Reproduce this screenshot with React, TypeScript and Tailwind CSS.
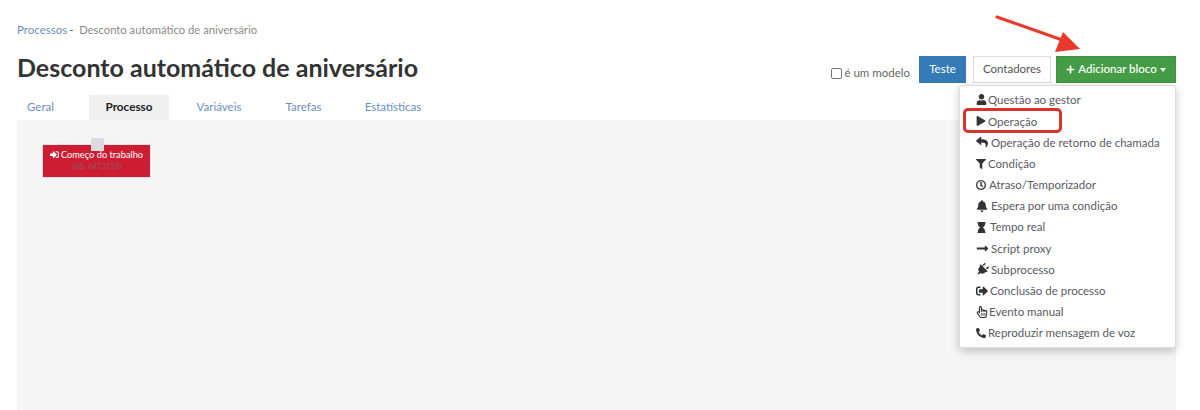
import React from "react";
import {
  FaUser,
  FaPlay,
  FaReply,
  FaFilter,
  FaRegClock,
  FaBell,
  FaHourglass,
  FaLongArrowAltRight,
  FaPlug,
  FaRegHandPointer,
  FaPhoneAlt,
  FaSignInAlt,
  FaSignOutAlt,
  FaPlus,
} from "react-icons/fa";

const blocks = [
  { label: "Questão ao gestor", icon: <FaUser size={11} />, gap: "w-[12px]" },
  { label: "Operação", icon: <FaPlay size={10} />, gap: "w-[12px]" },
  { label: "Operação de retorno de chamada", icon: <FaReply size={12} />, gap: "w-[15px]" },
  { label: "Condição", icon: <FaFilter size={10} />, gap: "w-[12px]" },
  { label: "Atraso/Temporizador", icon: <FaRegClock size={10} className="stroke-[20px]" />, gap: "w-[13px]" },
  { label: "Espera por uma condição", icon: <FaBell size={12} />, gap: "w-[15px]" },
  { label: "Tempo real", icon: <FaHourglass size={11} />, gap: "w-[14px]" },
  { label: "Script proxy", icon: <FaLongArrowAltRight size={13} />, gap: "w-[15px]" },
  { label: "Subprocesso", icon: <FaPlug size={13} className="rotate-45" />, gap: "w-[15px]" },
  { label: "Conclusão de processo", icon: <FaSignOutAlt size={12} />, gap: "w-[14px]" },
  { label: "Evento manual", icon: <FaRegHandPointer size={12} />, gap: "w-[13px]" },
  { label: "Reproduzir mensagem de voz", icon: <FaPhoneAlt size={10} />, gap: "w-[12px]" },
];

const tabs = [
  { label: "Geral", width: "w-[72px] pr-[25px]" },
  { label: "Processo", width: "w-[80px]" },
  { label: "Variáveis", width: "w-[100px]" },
  { label: "Tarefas", width: "w-[69px]" },
  { label: "Estatísticas", width: "w-[110px]" },
];

const App = () => {
  return (
    <div className="relative h-[410px] w-[1200px] overflow-hidden bg-white pl-[17px] pr-[24px] pt-[23px] font-['Lato',sans-serif] text-[#555]">
      <p className="flex h-[14px] whitespace-nowrap text-[11.5px] leading-[14px] text-[#8a8a8a]">
        <span className="text-[#6b8fbd]">Processos</span>
        <span className="w-[12px] pl-[2px] text-[#666]">-</span>
        <span className="text-[11.25px]">Desconto automático de aniversário</span>
      </p>

      <div className="mt-[14px] flex h-[44px] items-start justify-between">
        <h1 className="text-[25px] font-bold leading-[32px] text-[#333]">Desconto automático de aniversário</h1>
        <div className="flex items-start pt-[5px]">
          <label className="mr-[9px] mt-[9px] flex items-center text-[11.5px] leading-[16px] text-[#666]">
            <span className="mr-[2px] h-[11px] w-[11px] rounded-[2px] border border-[#777] bg-white" />
            é um modelo
          </label>
          <button className="h-[27px] w-[47px] bg-[#337ab7] pb-[1px] text-[11.5px] text-white">Teste</button>
          <button className="ml-[7px] h-[27px] w-[78px] border border-[#ddd] bg-white pb-[1px] text-[11.5px] text-[#555]">
            Contadores
          </button>
          <button className="ml-[5px] flex h-[27px] w-[120px] items-center justify-center border border-[#3f923f] bg-[#449d44] pb-[1px] text-[11.5px] font-medium text-white">
            <FaPlus size={9} className="mr-[3px]" />
            Adicionar bloco
            <span className="ml-[3px] mt-[2px] border-x-[3.5px] border-t-[4px] border-x-transparent border-t-white" />
          </button>
        </div>
      </div>

      <div className="flex h-[25px] text-[11.5px] text-[#6b8fbd]">
        {tabs.map((tab) =>
          tab.label === "Processo" ? (
            <div key={tab.label} className={`${tab.width} flex items-center justify-center bg-[#f0f0f0] pb-[1px] text-[11.75px] font-bold text-[#222]`}>
              {tab.label}
            </div>
          ) : (
            <div key={tab.label} className={`${tab.width} flex items-center justify-center pb-[1px]`}>
              {tab.label}
            </div>
          ),
        )}
      </div>

      <div className="h-[290px] bg-[#f5f5f5]" />

      {/* start node on the canvas */}
      <div className="absolute left-[42px] top-[144px] h-[34px] w-[109px] border border-[#e5e5e5] bg-[#ce1c33] text-center text-white">
        <span className="absolute left-[48px] top-[-7px] h-[13px] w-[13px] bg-[#dcd9e0]" />
        <div className="flex items-center justify-center pt-[3px] text-[9.25px] leading-[13px]">
          <FaSignInAlt size={9} className="mr-[2px]" />
          Começo do trabalho
        </div>
        <div className="text-[7.75px] leading-[11px] text-[#8f5a63]">(idS: 6473729)</div>
      </div>

      {/* dropdown */}
      <div className="absolute left-[959px] top-[85px] w-[217px] rounded-[3px] border border-[#ddd] bg-white pb-[3px] pt-[3.4px] shadow-[0_3px_10px_rgba(0,0,0,0.22)]">
        {blocks.map((block) => (
          <div key={block.label} className="flex h-[21.2px] items-center whitespace-nowrap pl-[16px] text-[11.5px] text-[#5a5a64]">
            <span className={`${block.gap} flex shrink-0 justify-start text-[#333]`}>{block.icon}</span>
            {block.label}
          </div>
        ))}
      </div>

      {/* annotations */}
      <div className="absolute left-[963px] top-[108px] h-[25px] w-[99px] rounded-[5px] border-[3px] border-[#d8322a]" />
      <svg className="absolute left-[990px] top-[10px]" width="100" height="50" viewBox="0 0 100 50">
        <line x1="7" y1="7" x2="78" y2="32" stroke="#e8392c" strokeWidth="3" strokeLinecap="round" />
        <polygon points="90,39 73,22 65,42" fill="#e8392c" />
      </svg>
    </div>
  );
};

export default App;
